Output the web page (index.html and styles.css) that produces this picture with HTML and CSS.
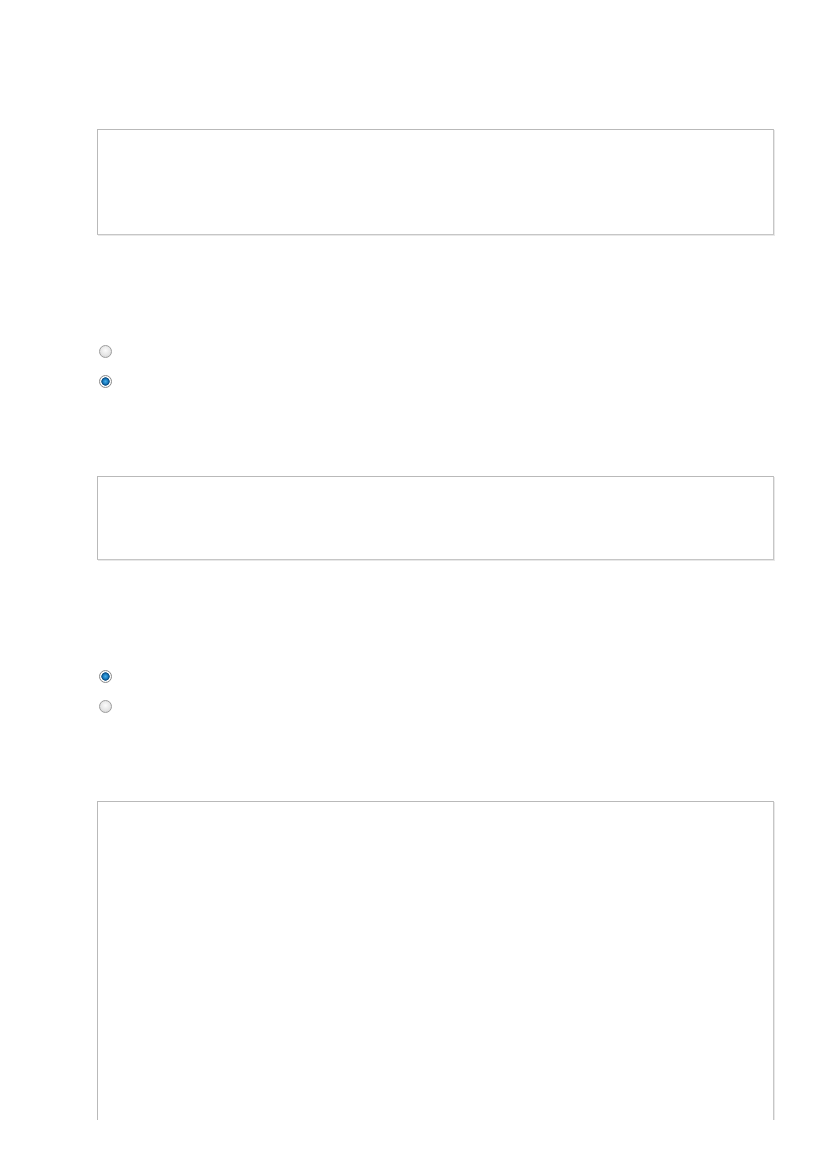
FILE: index.html
```html
<!DOCTYPE html>
<html lang="en">
<head>
    <meta charset="UTF-8">
    <meta name="viewport" content="width=device-width, initial-scale=1.0">
    <title>Form</title>
    <link rel="stylesheet" href="styles.css">
</head>
<body>
    <div class="page">
        <textarea class="field field-large" aria-label="First answer"></textarea>

        <div class="choices">
            <label class="choice"><input type="radio" name="q1"></label>
            <label class="choice"><input type="radio" name="q1" checked></label>
        </div>

        <textarea class="field field-small" aria-label="Second answer"></textarea>

        <div class="choices">
            <label class="choice"><input type="radio" name="q2" checked></label>
            <label class="choice"><input type="radio" name="q2"></label>
        </div>

        <textarea class="field field-tall" aria-label="Third answer"></textarea>
    </div>
</body>
</html>
```

FILE: styles.css
```css
* {
    margin: 0;
    padding: 0;
    box-sizing: border-box;
}

body {
    font-family: 'Liberation Sans', Arial, sans-serif;
    background-color: #fff;
    color: #333;
}

.page {
    width: 827px;
    height: 1120px;
    overflow: hidden;
    padding: 129px 0 0 97px;
}

.field {
    display: block;
    width: 677px;
    resize: none;
    background-color: #fff;
    border: 1px solid #c6c6c6;
    border-top-color: #b9b9b9;
    border-left-color: #b9b9b9;
    box-shadow: 1px 1px 0 #e8e8e8;
    outline: none;
}

.field-large {
    height: 106px;
}

.field-small {
    height: 84px;
}

.field-tall {
    height: 400px;
}

.choices {
    display: flex;
    flex-direction: column;
    gap: 17px;
    padding: 110px 0 88px 2px;
}

.choice {
    display: flex;
    height: 13px;
}

.choice input {
    appearance: none;
    -webkit-appearance: none;
    width: 13px;
    height: 13px;
    border-radius: 50%;
    border: 1px solid #9c9c9c;
    background: radial-gradient(circle at 50% 40%, #fbfbfb 0, #e6e6e6 55%, #cfcfcf 100%);
    margin: 0;
}

.choice input:checked {
    border-color: #8a8a8a;
    background: radial-gradient(circle at 50% 50%, #45aee8 0, #1a7cc0 2.4px, #0b4f84 3.6px, #0b4f84 3.9px, #ffffff 4.4px, #eeeeee 100%);
}
```
